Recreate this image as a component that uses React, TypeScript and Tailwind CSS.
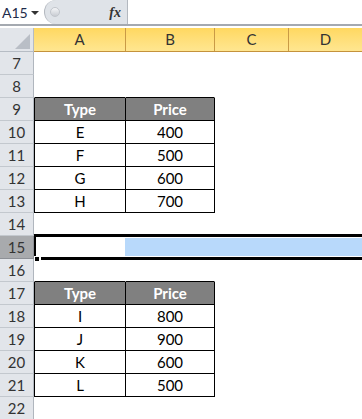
import React from "react";

type TableRow = { kind: "head" | "data"; a: string; b: string };

const tableRows: Record<number, TableRow> = {
  9: { kind: "head", a: "Type", b: "Price" },
  10: { kind: "data", a: "E", b: "400" },
  11: { kind: "data", a: "F", b: "500" },
  12: { kind: "data", a: "G", b: "600" },
  13: { kind: "data", a: "H", b: "700" },
  17: { kind: "head", a: "Type", b: "Price" },
  18: { kind: "data", a: "I", b: "800" },
  19: { kind: "data", a: "J", b: "900" },
  20: { kind: "data", a: "K", b: "600" },
  21: { kind: "data", a: "L", b: "500" },
};

const rows = Array.from({ length: 16 }, (_, i) => i + 7);

function FormulaBar() {
  return (
    <div className="flex h-[26px] border-b-2 border-[#a4a9b0] bg-white">
      <div className="flex w-[44px] items-center pl-[2px] pr-[5px]">
        <span className="text-[14px] text-[#1e2a4a]">A15</span>
        <span className="ml-auto mt-[2px] h-0 w-0 border-x-[4px] border-t-[4px] border-x-transparent border-t-[#333]" />
      </div>
      <div className="flex w-[84px] items-center rounded-l-full border-l border-r border-[#b3b8bf] bg-[#dfe3e8] pl-[5px] pr-[6px]">
        <span className="h-[10px] w-[10px] rounded-full border border-[#c2c6cc] bg-gradient-to-b from-[#f5f6f8] to-[#c8ccd2]" />
        <span className="ml-auto font-['Liberation_Serif',serif] text-[14px] font-bold italic text-[#333]">
          fx
        </span>
      </div>
      <div className="flex-1 bg-white" />
    </div>
  );
}

function ColumnHeader() {
  const col =
    "flex items-center justify-center border-r border-[#c99a46] text-[15px] text-[#333] bg-gradient-to-b from-[#ffd860] to-[#ffe690]";
  return (
    <div className="flex h-[24px]">
      <div className="flex w-[34px] items-end justify-end border-r border-b border-[#b6bcc4] bg-[#e2e5ea] pb-[2px] pr-[3px]">
        <svg width="15" height="15" viewBox="0 0 15 15">
          <polygon points="15,0 15,15 0,15" fill="#b9bec6" />
        </svg>
      </div>
      <div className="flex flex-1 border-b border-[#c4923c]">
        <div className={`${col} w-[92px]`}>A</div>
        <div className={`${col} w-[89px]`}>B</div>
        <div className={`${col} w-[74px]`}>C</div>
        <div className={`${col} flex-1 border-r-0`}>D</div>
      </div>
    </div>
  );
}

function SheetRow({ n }: { n: number }) {
  const t = tableRows[n];
  const above = tableRows[n + 1] && !t;
  const selected = n === 15;

  const cellBase = "flex items-center justify-center pt-[1px] text-[15px] border-b";
  let aCls = `${cellBase} w-[92px] border-l border-r`;
  let bCls = `${cellBase} w-[89px] border-r`;
  if (t) {
    const fill = t.kind === "head" ? "bg-[#808080] text-white font-bold" : "bg-white text-black";
    aCls += ` border-black ${fill}`;
    bCls += ` border-black ${fill}`;
  } else if (above) {
    aCls += " border-l-white border-r-white border-b-black";
    bCls += " border-r-white border-b-black";
  } else {
    aCls += " border-white";
    bCls += " border-white";
  }

  return (
    <div className="flex h-[23px]">
      <div
        className={`flex w-[34px] items-center justify-center pt-[1px] border-r border-b text-[15px] text-[#333] ${
          selected ? "bg-[#a8aaad] border-[#8d9096]" : "bg-[#e2e5ea] border-[#c3c8ce] border-r-[#b0b6be]"
        }`}
      >
        {n}
      </div>
      <div className="relative flex flex-1">
        <div className={aCls}>{t ? t.a : ""}</div>
        <div className={bCls}>{t ? t.b : ""}</div>
        <div className="flex-1" />
        {selected && (
          <>
            <div className="absolute left-[91px] right-0 top-[2px] h-[18px] bg-[#b8d9fb]" />
            <div className="absolute left-0 right-0 top-[-2px] z-10 h-[3px] bg-black" />
            <div className="absolute left-0 top-[-2px] z-10 h-[24px] w-[2px] bg-black" />
            <div className="absolute left-[7px] right-0 top-[21px] z-10 h-[3px] bg-black" />
            <div className="absolute left-0 top-[20px] z-10 h-[6px] w-[6px] border border-white bg-black" />
          </>
        )}
      </div>
    </div>
  );
}

export default function App() {
  return (
    <div className="h-[419px] w-[362px] overflow-hidden bg-white font-['Lato',sans-serif]">
      <FormulaBar />
      <div className="h-[2px]" />
      <ColumnHeader />
      {rows.map((n) => (
        <SheetRow key={n} n={n} />
      ))}
    </div>
  );
}
